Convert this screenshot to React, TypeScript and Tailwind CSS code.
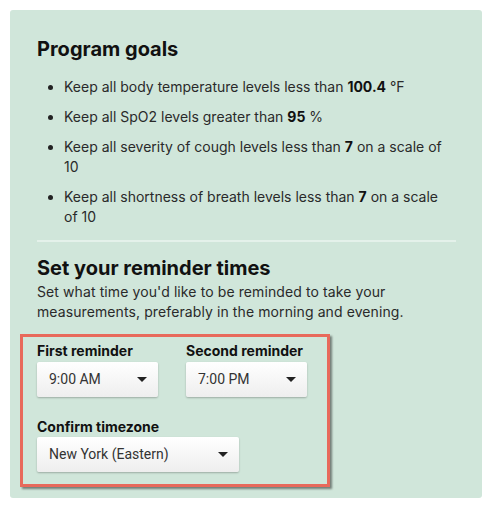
function Caret() {
  return (
    <svg width="10" height="5" viewBox="0 0 10 5" className="shrink-0">
      <path d="M0 0 L10 0 L5 5 Z" fill="#222" />
    </svg>
  );
}

function FakeSelect({ value, width }: { value: string; width: string }) {
  return (
    <div
      className={`${width} h-[35px] flex items-center justify-between pl-[12px] pr-[11px] rounded-[2px] bg-gradient-to-b from-white to-[#eeeeee] shadow-[0_1px_2px_rgba(0,0,0,0.25)] text-[14px] text-[#333] font-['Roboto',sans-serif]`}
    >
      <span>{value}</span>
      <Caret />
    </div>
  );
}

const GOALS = [
  { pre: "Keep all body temperature levels less than ", bold: "100.4", post: " °F" },
  { pre: "Keep all SpO2 levels greater than ", bold: "95", post: " %" },
  { pre: "Keep all severity of cough levels less than ", bold: "7", post: " on a scale of 10" },
  { pre: "Keep all shortness of breath levels less than ", bold: "7", post: " on a scale of 10" },
];

export default function App() {
  return (
    <div className="bg-white h-[512px] p-[10px] font-['Inter',sans-serif] text-[#2a2a2a]">
      <div className="h-[488px] w-[472px] bg-[#d0e6da] rounded-[3px] pt-[25px] pl-[27px] pr-[26px]">
        <h2 className="text-[20px] leading-[28px] font-bold text-[#111]">Program goals</h2>

        <ul className="mt-[14px] pl-[27px] pr-[8px] list-disc marker:text-[#222] flex flex-col gap-[10px] text-[14px] leading-[20px]">
          {GOALS.map((g, i) => (
            <li key={i}>
              {g.pre}
              <b className="font-bold text-[#111]">{g.bold}</b>
              {g.post}
            </li>
          ))}
        </ul>

        <div className="mt-[13px] h-[2px] bg-[#e4f1ea]" />

        <h2 className="mt-[12px] text-[20px] leading-[28px] font-bold text-[#111]">Set your reminder times</h2>
        <p className="text-[14px] leading-[20px] tracking-[0.1px]">
          Set what time you'd like to be reminded to take your measurements, preferably in the morning and evening.
        </p>

        {/* highlighted area */}
        <div className="mt-[12px] -ml-[17px] w-[310px] border-[3px] border-[#e8695b] shadow-[2px_2px_2px_rgba(0,0,0,0.45)] pt-[5px] pb-[12px] pl-[14px]">
          <div className="flex gap-[28px]">
            <div className="flex flex-col gap-[2px]">
              <label className="text-[14px] leading-[18px] font-bold text-[#111]">First reminder</label>
              <FakeSelect value="9:00 AM" width="w-[121px]" />
            </div>
            <div className="flex flex-col gap-[2px]">
              <label className="text-[14px] leading-[18px] font-bold text-[#111]">Second reminder</label>
              <FakeSelect value="7:00 PM" width="w-[121px]" />
            </div>
          </div>
          <div className="mt-[21px] flex flex-col gap-[1px]">
            <label className="text-[14px] leading-[18px] font-bold text-[#111]">Confirm timezone</label>
            <FakeSelect value="New York (Eastern)" width="w-[202px]" />
          </div>
        </div>
      </div>
    </div>
  );
}
